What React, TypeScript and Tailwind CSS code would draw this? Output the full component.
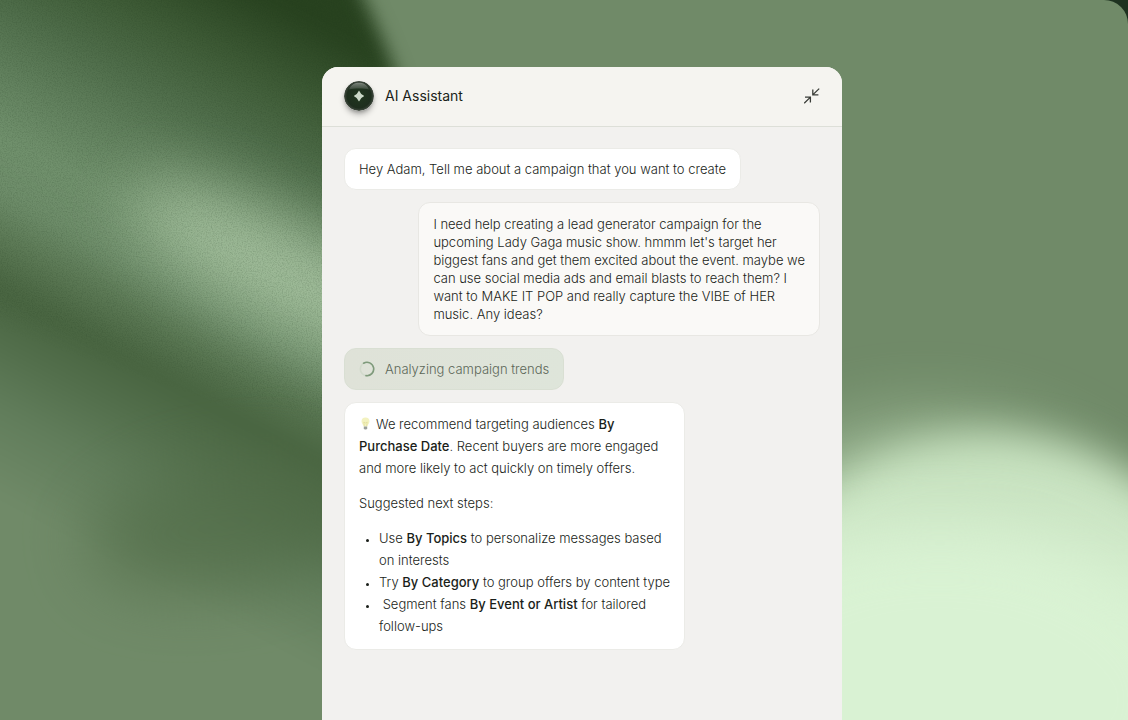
import React from 'react';

function Backdrop() {
  return (
    <svg
      className="absolute inset-0 w-full h-full"
      viewBox="0 0 1128 720"
      preserveAspectRatio="none"
      aria-hidden="true"
    >
      <defs>
        <filter id="blur10" x="-50%" y="-50%" width="200%" height="200%" colorInterpolationFilters="sRGB">
          <feGaussianBlur stdDeviation="9" />
        </filter>
        <filter id="blur18" x="-50%" y="-50%" width="200%" height="200%" colorInterpolationFilters="sRGB">
          <feGaussianBlur stdDeviation="20" />
        </filter>
        <filter id="blur30" x="-50%" y="-100%" width="200%" height="300%" colorInterpolationFilters="sRGB">
          <feGaussianBlur stdDeviation="32" />
        </filter>
        <filter id="grain" x="0" y="0" width="100%" height="100%" colorInterpolationFilters="sRGB">
          <feTurbulence type="fractalNoise" baseFrequency="0.8" numOctaves="2" seed="4" />
          <feColorMatrix type="matrix" values="0 0 0 0 0.1  0 0 0 0 0.2  0 0 0 0 0.1  0 0 0 1.4 -0.55" />
        </filter>
        <linearGradient id="glow" x1="0" y1="0" x2="0" y2="1">
          <stop offset="0" stopColor="#c4dfbc" />
          <stop offset="0.25" stopColor="#d0e9c9" />
          <stop offset="0.55" stopColor="#dcf5d6" />
          <stop offset="1" stopColor="#d6efd0" />
        </linearGradient>
        <linearGradient id="leaf" gradientUnits="userSpaceOnUse" x1="83" y1="-156" x2="-207" y2="390">
          <stop offset="0.08" stopColor="#28421f" />
          <stop offset="0.2" stopColor="#3f5c37" />
          <stop offset="0.29" stopColor="#4f6d4a" />
          <stop offset="0.39" stopColor="#62815e" />
          <stop offset="0.48" stopColor="#71916d" />
          <stop offset="0.56" stopColor="#6e8d6a" />
          <stop offset="0.63" stopColor="#5b7854" />
          <stop offset="0.7" stopColor="#486440" />
          <stop offset="0.78" stopColor="#536f4c" />
          <stop offset="0.87" stopColor="#617d5b" />
          <stop offset="1" stopColor="#708a68" />
        </linearGradient>
        <mask id="grainMask">
          <path d="M-40 -40H345L400 100V450L-40 300Z" fill="#fff" filter="url(#blur10)" />
        </mask>
      </defs>

      <rect width="1128" height="720" fill="#708a68" />

      {/* dark leaf on the left */}
      <path d="M-80 -80H325C365 0 388 45 408 110L430 800H-80Z" fill="url(#leaf)" filter="url(#blur10)" />
      <ellipse cx="225" cy="525" rx="140" ry="65" transform="rotate(-10 225 525)" fill="#4f6a45" opacity="0.6" filter="url(#blur30)" />
      <ellipse cx="290" cy="275" rx="180" ry="48" transform="rotate(27 290 275)" fill="#b0cba9" opacity="0.8" filter="url(#blur30)" />
      <rect width="420" height="500" filter="url(#grain)" mask="url(#grainMask)" opacity="0.25" />

      {/* light glow on the right */}
      <ellipse cx="925" cy="660" rx="280" ry="250" fill="#b3cfab" opacity="0.5" filter="url(#blur30)" />
      <ellipse cx="985" cy="680" rx="260" ry="246" fill="url(#glow)" filter="url(#blur18)" />
      <ellipse cx="940" cy="700" rx="260" ry="170" fill="#d9f2d3" filter="url(#blur30)" />
    </svg>
  );
}

function AssistantBadge() {
  return (
    <svg className="w-[30px] h-[30px] rounded-full shadow-md shadow-black/30" viewBox="0 0 30 30" aria-hidden="true">
      <defs>
        <radialGradient id="orb" cx="0.5" cy="0.5" r="0.5">
          <stop offset="0" stopColor="#20371f" />
          <stop offset="0.8" stopColor="#1e2e1e" />
          <stop offset="1" stopColor="#434b42" />
        </radialGradient>
        <linearGradient id="shine" x1="0" y1="0" x2="0" y2="1">
          <stop offset="0" stopColor="#fff" stopOpacity="0.4" />
          <stop offset="1" stopColor="#fff" stopOpacity="0.12" />
        </linearGradient>
      </defs>
      <circle cx="15" cy="15" r="15" fill="url(#orb)" />
      <path d="M5 8.5C7 3.5 11 1.8 15 1.8S23 3.5 25 8.5C20 7.2 10 7.2 5 8.5Z" fill="url(#shine)" />
      <path d="M15 9.5Q16.6 13.4 20.3 15Q16.6 16.6 15 20.5Q13.4 16.6 9.7 15Q13.4 13.4 15 9.5Z" fill="#cbd8c8" />
    </svg>
  );
}

function CollapseIcon() {
  return (
    <svg className="w-4 h-4" viewBox="0 0 16 16" fill="none" stroke="currentColor" strokeWidth="1.3" aria-hidden="true">
      <path d="M15.2 .6L9 6.6M8.8 1.4V6.8H14.4M.2 15.2L6.2 9.4M1 9.2H6.4V14.6" />
    </svg>
  );
}

function Spinner() {
  return (
    <svg className="w-4 h-4" viewBox="0 0 16 16" fill="none" strokeWidth="1.6" aria-hidden="true">
      <circle cx="8" cy="8" r="6.7" stroke="#d2dacc" />
      <path d="M4.6 2.2A6.7 6.7 0 1 1 7 14.6" stroke="#7f9a7b" strokeLinecap="round" />
    </svg>
  );
}

function Bulb() {
  return (
    <svg className="inline-block w-[13px] h-[13px] mr-1 align-[-1px]" viewBox="0 0 13 13" aria-hidden="true">
      <path d="M6.5 .4A4 4 0 0 0 2.5 4.4C2.5 6.5 4.4 7.3 4.6 9.4H8.4C8.6 7.3 10.5 6.5 10.5 4.4A4 4 0 0 0 6.5 .4Z" fill="#f3f2c0" />
      <path d="M5.3 9L4.8 5L6.5 6L8.2 5L7.7 9" fill="none" stroke="#ded891" strokeWidth=".6" />
      <path d="M4.8 9.4H8.2V11.6L7.3 12.6H5.7L4.8 11.6Z" fill="#9a9f9a" />
    </svg>
  );
}

export default function App() {
  return (
    <div className="min-h-screen bg-[#1e3220] font-['Inter','Liberation_Sans',sans-serif] text-[13px] font-light text-[#1a1e19]">
      <div className="relative min-h-screen flex flex-col items-center overflow-hidden rounded-tr-3xl pt-[67px] pl-9">
        <Backdrop />

        <main className="relative flex-1 flex flex-col w-full max-w-[520px] rounded-t-2xl overflow-hidden bg-[#f2f1ef]">
          <header className="flex items-center justify-between h-[60px] px-[22px] pb-0.5 bg-[#f5f4f0] border-b border-[#dddfd8]">
            <div className="flex items-center gap-[11px]">
              <AssistantBadge />
              <h1 className="text-sm font-normal">AI Assistant</h1>
            </div>
            <button type="button" aria-label="Collapse" className="text-[#3a3d38]">
              <CollapseIcon />
            </button>
          </header>

          <div className="flex flex-col items-start gap-3 px-[22px] py-[21px]">
            <div className="rounded-xl border border-[#ebebe7] bg-white px-3.5 py-2.5 leading-5">
              Hey Adam, Tell me about a campaign that you want to create
            </div>

            <div className="self-end rounded-xl border border-[#e8e7e3] bg-[#faf9f7] px-3.5 py-3 leading-[18px]">
              I need help creating a lead generator campaign for the<br />
              upcoming Lady Gaga music show. hmmm let's target her<br />
              biggest fans and get them excited about the event. maybe we<br />
              can use social media ads and email blasts to reach them? I<br />
              want to MAKE IT POP and really capture the VIBE of HER<br />
              music. Any ideas?
            </div>

            <div
              role="status"
              className="flex items-center gap-2.5 rounded-xl border border-[#d9dfd3] bg-linear-to-r from-[#dfe2d8] to-[#dee5da] px-3.5 py-2.5 leading-5 text-[#5c6758]"
            >
              <Spinner />
              Analyzing campaign trends
            </div>

            <div className="rounded-xl border border-[#ebebe7] bg-white px-3.5 pt-2.5 pb-3 leading-[22px]">
              <p>
                <Bulb />
                We recommend targeting audiences <strong className="font-medium">By</strong><br />
                <strong className="font-medium">Purchase Date</strong>. Recent buyers are more engaged<br />
                and more likely to act quickly on timely offers.
              </p>
              <p className="my-[13px]">Suggested next steps:</p>
              <ul className="list-disc pl-5 marker:text-[10px]">
                <li>
                  Use <strong className="font-medium">By Topics</strong> to personalize messages based<br />
                  on interests
                </li>
                <li>
                  Try <strong className="font-medium">By Category</strong> to group offers by content type
                </li>
                <li>
                  &nbsp;Segment fans <strong className="font-medium">By Event or Artist</strong> for tailored<br />
                  follow-ups
                </li>
              </ul>
            </div>
          </div>
        </main>
      </div>
    </div>
  );
}
